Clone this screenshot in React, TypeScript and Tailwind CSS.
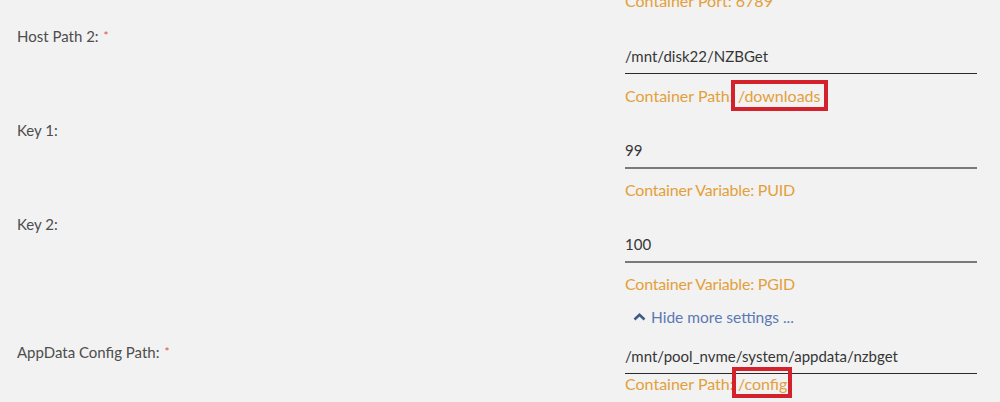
import React from "react";

const font = { fontFamily: "Lato, 'Open Sans', sans-serif" };

function Label({ text, required }: { text: string; required?: boolean }) {
  return (
    <div className="w-[608px] shrink-0 pl-[17px] text-[15px] leading-[22px] text-[#4d4d4d]">
      {text}
      {required && <span className="ml-[5px] text-[12px] text-[#d9534f] align-top">*</span>}
    </div>
  );
}

function Field({ value, dark }: { value: string; dark?: boolean }) {
  return (
    <div
      className={`pt-[4px] pb-[6px] text-[15px] leading-[22px] text-[#363636] ${
        dark ? "border-b border-[#2a2a2a]" : "border-b-[2px] border-[#7a7a7a] -mb-[1px]"
      }`}
    >
      {value}
    </div>
  );
}

function Marked({ children, box }: { children: React.ReactNode; box: string }) {
  return (
    <span className="relative inline-block align-top leading-[22px]">
      {children}
      <span className={`pointer-events-none absolute border-[4px] border-[#d3222c] ${box}`} />
    </span>
  );
}

export default function App() {
  return (
    <div className="h-[402px] w-[1000px] overflow-hidden bg-[#f2f2f2]" style={font}>
      <div className="flex flex-col">
        {/* tail of the previous port row */}
        <div className="-mt-[10px] flex h-[22px]">
          <div className="w-[608px] shrink-0" />
          <div className="pl-[17px] text-[16px] leading-[22px] text-[#e3a03a]">Container Port: 6789</div>
        </div>

        {/* Host Path 2 */}
        <div className="mt-[13px] flex">
          <Label text="Host Path 2:" required />
          <div className="w-[352px] pl-[17px] pt-[16px] box-content">
            <Field value="/mnt/disk22/NZBGet" dark />
            <div className="mt-[11px] text-[16px] leading-[22px] text-[#e3a03a]">
              Container Path:{" "}
              <Marked box="-left-[7px] -right-[8px] -top-[5px] -bottom-[4px]">/downloads</Marked>
            </div>
          </div>
        </div>

        {/* Key 1 */}
        <div className="mt-[12px] flex">
          <Label text="Key 1:" />
          <div className="w-[352px] pl-[17px] pt-[16px] box-content">
            <Field value="99" />
            <div className="mt-[11px] text-[16px] tracking-[-0.2px] leading-[22px] text-[#e3a03a]">
              Container Variable: PUID
            </div>
          </div>
        </div>

        {/* Key 2 */}
        <div className="mt-[12px] flex">
          <Label text="Key 2:" />
          <div className="w-[352px] pl-[17px] pt-[16px] box-content">
            <Field value="100" />
            <div className="mt-[11px] text-[16px] tracking-[-0.2px] leading-[22px] text-[#e3a03a]">
              Container Variable: PGID
            </div>
            <div className="mt-[11px] flex items-center gap-[5px] text-[15.5px] leading-[22px] text-[#5a79b5]">
              <svg width="13" height="8" viewBox="0 0 13 8" className="ml-[8px]">
                <path d="M1.5 6.5 L6.5 1.8 L11.5 6.5" fill="none" stroke="#3d5a8c" strokeWidth="2.6" />
              </svg>
              <span>Hide more settings ...</span>
            </div>
          </div>
        </div>

        {/* AppData Config Path */}
        <div className="mt-[13px] flex">
          <Label text="AppData Config Path:" required />
          <div className="w-[352px] pl-[17px] box-content">
            <Field value="/mnt/pool_nvme/system/appdata/nzbget" dark />
            <div className="-mt-[1px] text-[16px] leading-[22px] text-[#e3a03a]">
              Container Path:{" "}
              <Marked box="-left-[6px] -right-[5px] -top-[6px] -bottom-[3px]">/config</Marked>
            </div>
          </div>
        </div>
      </div>
    </div>
  );
}
